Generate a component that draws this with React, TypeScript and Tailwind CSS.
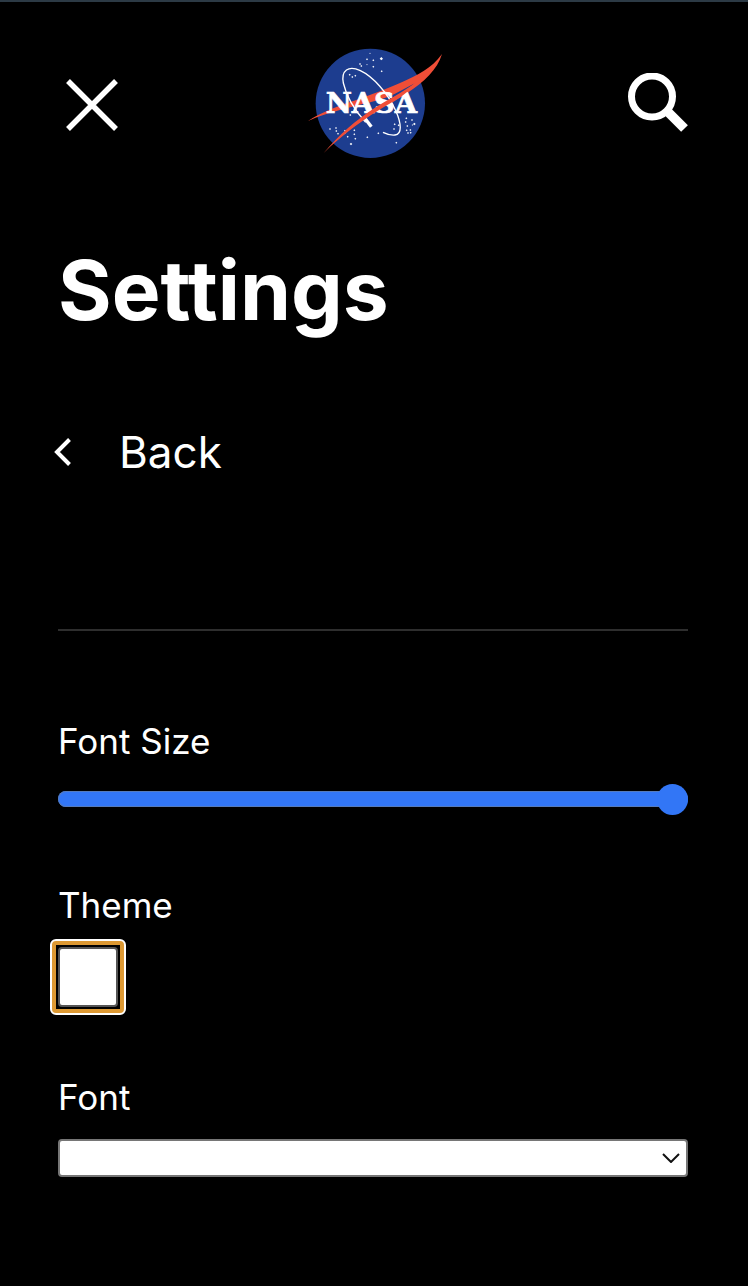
import { useState } from "react";

const STARS: [number, number, number][] = [
  [210, 39, 2], [201, 57, 3], [220, 60, 3], [244, 55, 5], [180, 71, 3], [184, 77, 3], [201, 73, 2],
  [220, 79, 3], [245, 93, 3], [149, 103, 3], [157, 110, 3], [166, 106, 3], [151, 224, 3],
  [90, 266, 3], [108, 263, 3], [109, 272, 3], [114, 280, 3], [135, 271, 3], [134, 279, 3],
  [163, 270, 3], [163, 282, 3], [143, 289, 3], [166, 295, 3], [202, 291, 3], [153, 311, 4],
  [235, 279, 3], [289, 307, 3], [284, 252, 3], [282, 266, 3], [296, 255, 3], [319, 234, 3],
  [317, 245, 3], [322, 257, 3], [336, 239, 3], [343, 251, 4], [337, 254, 2], [320, 270, 3],
  [331, 269, 3], [324, 278, 3], [332, 277, 3],
];

function NasaLogo() {
  return (
    <svg viewBox="24 20 405 336" className="h-[112px] w-[135px]" role="img" aria-label="NASA home">
      <circle cx="211" cy="189" r="164" fill="#1d3d8f" />
      <g fill="#fff">
        {STARS.map(([x, y, r]) => (
          <path key={`${x}-${y}`} d={`M${x - r} ${y}L${x} ${y - r}L${x + r} ${y}L${x} ${y + r}Z`} />
        ))}
      </g>
      <path
        d="M24 242C60 218 110 199 150 185C185 174 250 150 300 128C355 104 395 84 426 41C412 88 372 125 322 158C302 171 284 182 268 192L254 187C290 166 322 150 345 129C300 152 270 172 225 182C180 194 80 216 24 242Z"
        fill="#f04e37"
      />
      <path
        d="M197 246C166 212 139 168 130 128C123 91 145 74 181 91C218 108 264 158 288 213C304 250 307 282 285 284C274 285 261 282 249 276"
        fill="none"
        stroke="#fff"
        strokeWidth="4"
      />
      <path d="M187 232L195 226L218 256L210 262Z" fill="#fff" />
      <text
        x="214"
        y="219"
        textAnchor="middle"
        fill="#fff"
        stroke="#fff"
        strokeWidth="2"
        fontFamily="DejaVu Serif, serif"
        fontWeight="700"
        fontSize="86"
      >
        NASA
      </text>
      <path
        d="M71 338C118 282 170 237 225 202C262 178 310 155 350 124C330 154 292 176 262 194C196 233 128 282 71 338Z"
        fill="#f04e37"
      />
    </svg>
  );
}

export default function App() {
  const [size, setSize] = useState(100);
  const [theme, setTheme] = useState(false);
  const [font, setFont] = useState("");

  return (
    <div className="min-h-screen border-t-2 border-[#2c3a45] bg-black pr-[60px] pl-[58px] font-['Inter',sans-serif] text-white">
      <header className="flex items-center justify-between pt-[45px]">
        <button type="button" aria-label="Close" className="pt-1 pr-1 pl-2">
          <svg viewBox="0 0 52 52" className="size-[52px]" fill="none" stroke="#fff" strokeWidth="5.5">
            <path d="M2 2L50 50M50 2L2 50" />
          </svg>
        </button>
        <a href="#home">
          <NasaLogo />
        </a>
        <button type="button" aria-label="Search">
          <svg viewBox="0 0 60 60" className="size-[60px]" fill="none" stroke="#fff">
            <circle cx="24" cy="23.5" r="20.5" strokeWidth="7" />
            <path d="M37 36L56.5 55.5" strokeWidth="9.5" />
          </svg>
        </button>
      </header>

      <main>
        <h1 className="mt-[82px] text-[82px] leading-[100px] font-bold">Settings</h1>

        <a href="#back" className="mt-[80px] -ml-1 flex w-fit items-center gap-[48px] text-[44px] leading-[62px]">
          <svg viewBox="0 0 17 28" className="h-7 w-[17px]" fill="none" stroke="#fff" strokeWidth="4">
            <path d="M15.5 1.5L3 14L15.5 26.5" />
          </svg>
          Back
        </a>

        <hr className="mt-[146px] border-t-2 border-[#2e2e2e]" />

        <form className="flex flex-col pt-[88px]">
          <label htmlFor="size" className="text-[35px] leading-[44px]">
            Font Size
          </label>
          <input
            id="size"
            type="range"
            value={size}
            onChange={(e) => setSize(Number(e.target.value))}
            style={{ backgroundImage: `linear-gradient(to right, #3276f6 ${size}%, #efefef ${size}%)` }}
            className="mt-[28px] h-4 w-full appearance-none rounded-full shadow-[inset_0_0_0_1px_#557bbd] [&::-webkit-slider-thumb]:size-[31px] [&::-webkit-slider-thumb]:appearance-none [&::-webkit-slider-thumb]:rounded-full [&::-webkit-slider-thumb]:bg-[#3276f6]"
          />

          <label htmlFor="theme" className="mt-[76px] text-[35px] leading-[44px]">
            Theme
          </label>
          <span className="mt-[12px] -ml-2 w-fit rounded-md border-2 border-white bg-white">
            <span className="block rounded border-4 border-[#dd9933] bg-black p-0.5">
              <input
                id="theme"
                type="checkbox"
                checked={theme}
                onChange={(e) => setTheme(e.target.checked)}
                className="block size-[60px] appearance-none rounded border-2 border-[#555] bg-white checked:bg-[#3276f6]"
              />
            </span>
          </span>

          <label htmlFor="font" className="mt-[60px] text-[35px] leading-[44px]">
            Font
          </label>
          <div className="relative mt-5">
            <select
              id="font"
              value={font}
              onChange={(e) => setFont(e.target.value)}
              className="block h-[38px] w-full appearance-none rounded border-2 border-[#767676] bg-white px-2 text-xl text-black"
            >
              <option value="" />
            </select>
            <svg
              viewBox="0 0 18 10"
              className="pointer-events-none absolute top-[14px] right-2 h-[10px] w-[18px]"
              fill="none"
              stroke="#111"
              strokeWidth="2"
            >
              <path d="M1 1L9 9L17 1" />
            </svg>
          </div>
        </form>
      </main>
    </div>
  );
}
